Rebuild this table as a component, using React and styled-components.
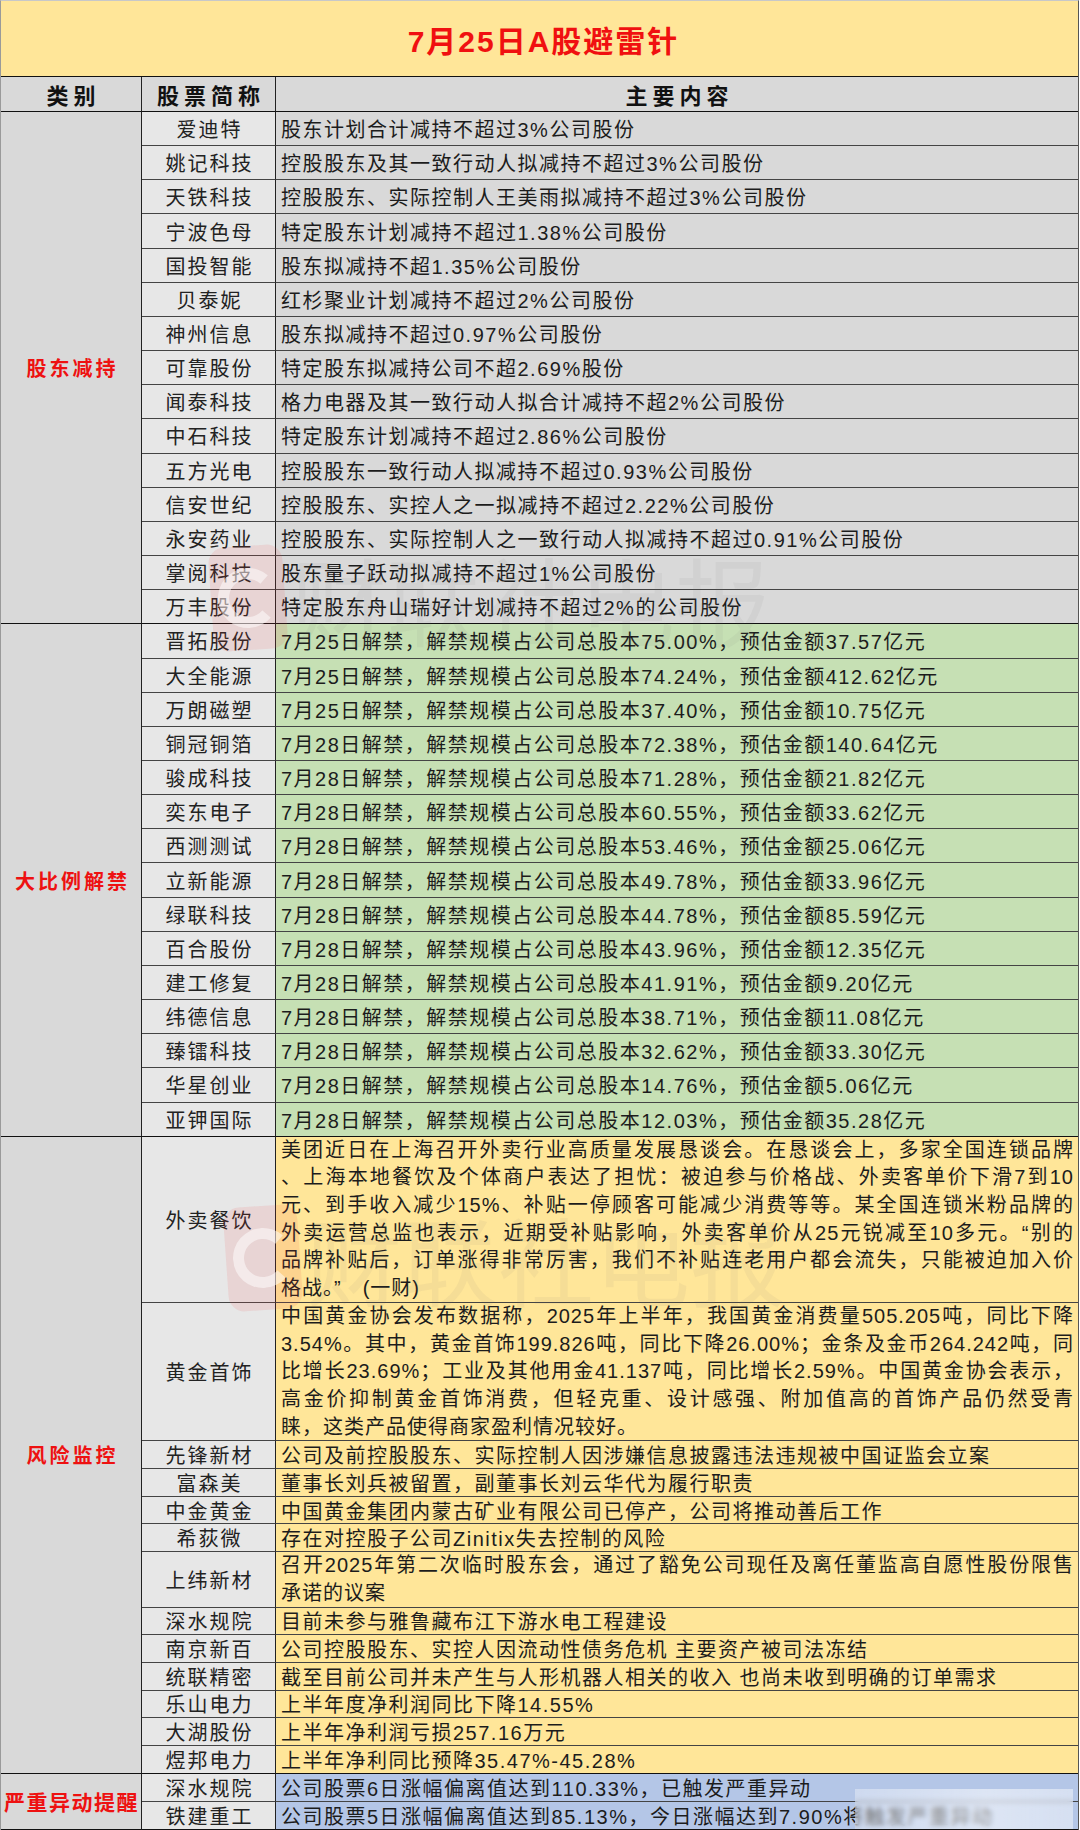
import React from 'react';
import styled, { createGlobalStyle } from 'styled-components';

const GlobalStyle = createGlobalStyle`
  html, body { margin: 0; padding: 0; background: #ffffff; }
  body {
    font-family: "Liberation Sans", "Noto Sans CJK SC", sans-serif;
    color: #1a1a1a;
  }
`;

const tones = {
  gray: '#d9d9d9',
  green: '#c6e0b4',
  yellow: '#ffe699',
  blue: '#b4c6e7',
};

const Page = styled.div`
  position: relative;
  width: 1077px;
  border-left: 1px solid #9a9a9a;
  border-top: 1px solid #c8c8c8;
  border-right: 1px solid #555;
  overflow: hidden;
`;

const Title = styled.div`
  height: 76px;
  background: #ffe699;
  border-bottom: 1px solid #111;
  display: flex;
  align-items: center;
  justify-content: center;
  color: #f01010;
  font-size: 30px;
  font-weight: 700;
  letter-spacing: 2px;
  padding-left: 8px;
  box-sizing: border-box;
`;

const Grid = styled.div`
  display: grid;
  grid-template-columns: 141px 134px 1fr;
`;

const HeaderCell = styled.div`
  height: 35px;
  box-sizing: border-box;
  background: #d9d9d9;
  border-bottom: 1px solid #111;
  border-right: ${p => (p.$last ? 'none' : '1px solid #222')};
  display: flex;
  align-items: center;
  justify-content: center;
  font-size: 22px;
  font-weight: 700;
  letter-spacing: 5px;
  padding-left: 5px;
  color: #111;
`;

const CategoryCell = styled.div`
  grid-row: span ${p => p.$span};
  background: #d9d9d9;
  border-right: 1px solid #222;
  border-bottom: 1px solid #111;
  display: flex;
  align-items: center;
  justify-content: center;
  color: #ee1111;
  font-size: ${p => (p.$compact ? '21px' : '20px')};
  font-weight: 700;
  letter-spacing: ${p => (p.$compact ? '1.5px' : '3px')};
  padding-left: ${p => (p.$compact ? '1px' : '3px')};
  white-space: nowrap;
`;

const NameCell = styled.div`
  height: ${p => p.$h}px;
  box-sizing: border-box;
  background: #e7e7e7;
  border-right: 1px solid #222;
  border-bottom: 1px solid ${p => (p.$end ? '#111' : '#444')};
  display: flex;
  align-items: center;
  justify-content: center;
  font-size: 20px;
  letter-spacing: 2px;
  padding-left: 2px;
  white-space: nowrap;
  color: #222;
`;

const ContentCell = styled.div`
  height: ${p => p.$h}px;
  box-sizing: border-box;
  background: ${p => tones[p.$tone]};
  border-bottom: 1px solid ${p => (p.$end ? '#111' : '#444')};
  display: flex;
  flex-direction: column;
  justify-content: ${p => (p.$top ? 'flex-start' : 'center')};
  padding: 0 4px 0 5px;
  font-size: 20px;
  letter-spacing: 1.5px;
  color: #1c1c1c;
  white-space: nowrap;
`;

const Line = styled.span`
  display: block;
  height: 27.7px;
  line-height: 27.7px;
  text-align: justify;
  text-align-last: ${p => (p.$last ? 'left' : 'justify')};
  letter-spacing: 1px;
`;

const Watermark = styled.div`
  position: absolute;
  left: ${p => p.$x}px;
  top: ${p => p.$y}px;
  display: flex;
  align-items: center;
  gap: 6px;
  pointer-events: none;
`;

const WatermarkLogo = styled.div`
  width: 74px;
  height: 104px;
  border-radius: 16px;
  background: rgba(235, 70, 70, 0.12);
  display: flex;
  align-items: center;
  justify-content: center;
  transform: rotate(-4deg);
`;

const WatermarkRing = styled.div`
  width: 38px;
  height: 38px;
  border-radius: 50%;
  border: 11px solid rgba(255, 255, 255, 0.5);
  border-right-color: transparent;
`;

const WatermarkText = styled.span`
  font-family: "Noto Sans CJK SC", sans-serif;
  font-size: 96px;
  line-height: 1;
  color: rgba(110, 110, 110, 0.07);
  letter-spacing: 0;
`;

const BlurPatch = styled.div`
  position: absolute;
  left: 854px;
  top: 1788px;
  width: 218px;
  height: 40px;
  background: linear-gradient(90deg, rgba(255,255,255,0.35), rgba(255,255,255,0.55) 60%, rgba(255,255,255,0.45));
  backdrop-filter: blur(2.5px);
  pointer-events: none;
`;

const ROW = 34.17;
const LH = 27.7;

const sections = [
  {
    label: '股东减持',
    tone: 'gray',
    rows: [
      ['爱迪特', '股东计划合计减持不超过3%公司股份'],
      ['姚记科技', '控股股东及其一致行动人拟减持不超过3%公司股份'],
      ['天铁科技', '控股股东、实际控制人王美雨拟减持不超过3%公司股份'],
      ['宁波色母', '特定股东计划减持不超过1.38%公司股份'],
      ['国投智能', '股东拟减持不超1.35%公司股份'],
      ['贝泰妮', '红杉聚业计划减持不超过2%公司股份'],
      ['神州信息', '股东拟减持不超过0.97%公司股份'],
      ['可靠股份', '特定股东拟减持公司不超2.69%股份'],
      ['闻泰科技', '格力电器及其一致行动人拟合计减持不超2%公司股份'],
      ['中石科技', '特定股东计划减持不超过2.86%公司股份'],
      ['五方光电', '控股股东一致行动人拟减持不超过0.93%公司股份'],
      ['信安世纪', '控股股东、实控人之一拟减持不超过2.22%公司股份'],
      ['永安药业', '控股股东、实际控制人之一致行动人拟减持不超过0.91%公司股份'],
      ['掌阅科技', '股东量子跃动拟减持不超过1%公司股份'],
      ['万丰股份', '特定股东舟山瑞好计划减持不超过2%的公司股份'],
    ].map(([n, t]) => ({ name: n, lines: [t], h: ROW })),
  },
  {
    label: '大比例解禁',
    tone: 'green',
    rows: [
      ['晋拓股份', '25', '75.00', '37.57'],
      ['大全能源', '25', '74.24', '412.62'],
      ['万朗磁塑', '25', '37.40', '10.75'],
      ['铜冠铜箔', '28', '72.38', '140.64'],
      ['骏成科技', '28', '71.28', '21.82'],
      ['奕东电子', '28', '60.55', '33.62'],
      ['西测测试', '28', '53.46', '25.06'],
      ['立新能源', '28', '49.78', '33.96'],
      ['绿联科技', '28', '44.78', '85.59'],
      ['百合股份', '28', '43.96', '12.35'],
      ['建工修复', '28', '41.91', '9.20'],
      ['纬德信息', '28', '38.71', '11.08'],
      ['臻镭科技', '28', '32.62', '33.30'],
      ['华星创业', '28', '14.76', '5.06'],
      ['亚钾国际', '28', '12.03', '35.28'],
    ].map(([n, d, p, a]) => ({
      name: n,
      lines: [`7月${d}日解禁，解禁规模占公司总股本${p}%，预估金额${a}亿元`],
      h: ROW,
    })),
  },
  {
    label: '风险监控',
    tone: 'yellow',
    rows: [
      {
        name: '外卖餐饮',
        lines: [
          '美团近日在上海召开外卖行业高质量发展恳谈会。在恳谈会上，多家全国连锁品牌',
          '、上海本地餐饮及个体商户表达了担忧：被迫参与价格战、外卖客单价下滑7到10',
          '元、到手收入减少15%、补贴一停顾客可能减少消费等等。某全国连锁米粉品牌的',
          '外卖运营总监也表示，近期受补贴影响，外卖客单价从25元锐减至10多元。“别的',
          '品牌补贴后，订单涨得非常厉害，我们不补贴连老用户都会流失，只能被迫加入价',
          '格战。”　(一财)',
        ],
      },
      {
        name: '黄金首饰',
        lines: [
          '中国黄金协会发布数据称，2025年上半年，我国黄金消费量505.205吨，同比下降',
          '3.54%。其中，黄金首饰199.826吨，同比下降26.00%；金条及金币264.242吨，同',
          '比增长23.69%；工业及其他用金41.137吨，同比增长2.59%。中国黄金协会表示，',
          '高金价抑制黄金首饰消费，但轻克重、设计感强、附加值高的首饰产品仍然受青',
          '睐，这类产品使得商家盈利情况较好。',
        ],
      },
      { name: '先锋新材', lines: ['公司及前控股股东、实际控制人因涉嫌信息披露违法违规被中国证监会立案'] },
      { name: '富森美', lines: ['董事长刘兵被留置，副董事长刘云华代为履行职责'] },
      { name: '中金黄金', lines: ['中国黄金集团内蒙古矿业有限公司已停产，公司将推动善后工作'] },
      { name: '希荻微', lines: ['存在对控股子公司Zinitix失去控制的风险'] },
      {
        name: '上纬新材',
        lines: ['召开2025年第二次临时股东会，通过了豁免公司现任及离任董监高自愿性股份限售', '承诺的议案'],
      },
      { name: '深水规院', lines: ['目前未参与雅鲁藏布江下游水电工程建设'] },
      { name: '南京新百', lines: ['公司控股股东、实控人因流动性债务危机 主要资产被司法冻结'] },
      { name: '统联精密', lines: ['截至目前公司并未产生与人形机器人相关的收入 也尚未收到明确的订单需求'] },
      { name: '乐山电力', lines: ['上半年度净利润同比下降14.55%'] },
      { name: '大湖股份', lines: ['上半年净利润亏损257.16万元'] },
      { name: '煜邦电力', lines: ['上半年净利同比预降35.47%-45.28%'] },
    ].map(r => ({ ...r, h: r.lines.length * LH, top: r.lines.length > 1 })),
  },
  {
    label: '严重异动提醒',
    tone: 'blue',
    compact: true,
    rows: [
      { name: '深水规院', lines: ['公司股票6日涨幅偏离值达到110.33%，已触发严重异动'], h: 28 },
      { name: '铁建重工', lines: ['公司股票5日涨幅偏离值达到85.13%，今日涨幅达到7.90%将触发严重异动'], h: 28 },
    ],
  },
];

function Section({ section }) {
  const { label, tone, rows, compact } = section;
  return (
    <>
      <CategoryCell $span={rows.length} $compact={compact}>{label}</CategoryCell>
      {rows.map((r, i) => {
        const end = i === rows.length - 1;
        return (
          <React.Fragment key={r.name + i}>
            <NameCell $h={r.h} $end={end}>{r.name}</NameCell>
            <ContentCell $h={r.h} $end={end} $tone={tone} $top={r.top}>
              {r.lines.length > 1
                ? r.lines.map((l, j) => (
                    <Line key={j} $last={j === r.lines.length - 1}>{l}</Line>
                  ))
                : r.lines[0]}
            </ContentCell>
          </React.Fragment>
        );
      })}
    </>
  );
}

export default function App() {
  return (
    <>
      <GlobalStyle />
      <Page>
        <Title>7月25日A股避雷针</Title>
        <Grid>
          <HeaderCell>类别</HeaderCell>
          <HeaderCell>股票简称</HeaderCell>
          <HeaderCell $last>主要内容</HeaderCell>
          {sections.map(s => (
            <Section key={s.label} section={s} />
          ))}
        </Grid>
        <Watermark $x={210} $y={545}>
          <WatermarkLogo><WatermarkRing /></WatermarkLogo>
          <WatermarkText>财联社电报</WatermarkText>
        </Watermark>
        <Watermark $x={225} $y={1205}>
          <WatermarkLogo><WatermarkRing /></WatermarkLogo>
          <WatermarkText>财联社电报</WatermarkText>
        </Watermark>
        <BlurPatch />
      </Page>
    </>
  );
}
